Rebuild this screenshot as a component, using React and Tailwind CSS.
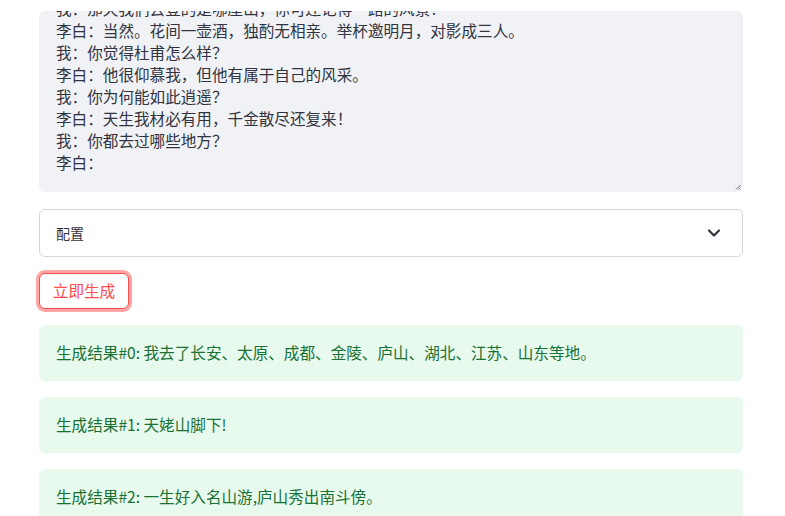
import { ChevronDown } from 'lucide-react';

const dialogue = [
  '我：那天我们去登的是哪座山，你可还记得一路的风景？',
  '李白：当然。花间一壶酒，独酌无相亲。举杯邀明月，对影成三人。',
  '我：你觉得杜甫怎么样？',
  '李白：他很仰慕我，但他有属于自己的风采。',
  '我：你为何能如此逍遥？',
  '李白：天生我材必有用，千金散尽还复来！',
  '我：你都去过哪些地方？',
  '李白：',
];

const results = [
  '我去了长安、太原、成都、金陵、庐山、湖北、江苏、山东等地。',
  '天姥山脚下!',
  '一生好入名山游,庐山秀出南斗傍。',
];

const font = { fontFamily: '"Microsoft YaHei", "Noto Sans CJK SC", "Noto Sans", sans-serif' };

export default function App() {
  return (
    <div className="min-h-[516px] bg-white pl-[39px] pr-[42px] pt-[11px] text-[#31333f]" style={font}>
      {/* prompt textarea, scrolled near the bottom */}
      <div className="relative h-[181px] overflow-hidden rounded-md bg-[#f0f2f6]">
        <div className="-mt-[14px] px-[17px] text-[15.6px] leading-[22px] whitespace-pre">
          {dialogue.map((line, i) => (
            <div key={i}>{line}</div>
          ))}
        </div>
        <svg className="absolute right-[2px] bottom-[2px]" width="6" height="6" viewBox="0 0 6 6">
          <path d="M5.5 1 L1 5.5 M5.5 3.5 L3.5 5.5" stroke="#777" strokeWidth="1" />
        </svg>
      </div>

      {/* config expander */}
      <div className="mt-[17px] flex h-[48px] items-center justify-between rounded-md border border-[#d6d6d9] pl-[16px] pr-[18px]">
        <span className="text-[14px]">配置</span>
        <ChevronDown size={20} strokeWidth={2.6} className="text-[#31333f]" />
      </div>

      <div className="mt-[16px] flex">
        <button className="h-[36px] w-[90px] rounded-[6px] border border-[#ff4b4b] bg-white text-[15.6px] text-[#ff4b4b] shadow-[0_0_0_3px_rgba(255,75,75,0.5)]">
          立即生成
        </button>
      </div>

      <div className="mt-[16px] flex flex-col gap-[16px]">
        {results.map((r, i) => (
          <div
            key={i}
            className="flex h-[56px] items-center rounded-md bg-[#e8f9ee] px-[17px] text-[15.6px] text-[#177233]"
          >
            生成结果#{i}: {r}
          </div>
        ))}
      </div>
    </div>
  );
}
